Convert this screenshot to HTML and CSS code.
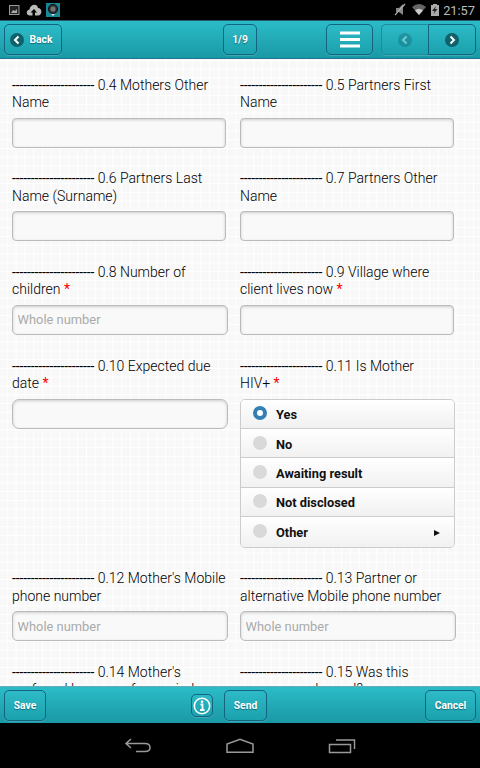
FILE: index.html
```html
<!DOCTYPE html>
<html lang="en">

<head>
    <meta charset="UTF-8">
    <meta name="viewport" content="width=device-width, initial-scale=1.0">
    <title>Registration Form</title>
    <link rel="stylesheet" href="styles.css">
</head>

<body>
    <div class="status-bar">
        <div class="status-left">
            <svg width="60" height="20" viewBox="0 0 60 20">
                <rect x="9.500" y="5.500" width="9.500" height="9" fill="#222" stroke="#999" />
                <path d="M11 13l2-3 2 1 2-2v4z" fill="#aaa" />
                <path d="M30.500 15.500c-4.500.5-5-5.500-1-6 1-6 8-6 8.500-1.500 4.500 0 4.500 7.500 0 7.500h-3v-3h2l-3-3.500-3.500 3.500h2v3z" fill="#bbb" />
                <rect x="46" y="3" width="14" height="14" fill="#188896" />
                <circle cx="53" cy="9" r="4.500" fill="#333" stroke="#111" stroke-width="1.200" />
                <circle cx="53" cy="9" r="2.500" fill="#777" />
                <path d="M51 14h4l-2 2z" fill="#ddd" />
            </svg>
        </div>
        <div class="status-right">
            <svg width="46" height="20" viewBox="0 0 46 20">
                <path d="M2 8h3l4-4v11l-4-3H2z" fill="#888" />
                <path d="M1 15L11 4" stroke="#aaa" stroke-width="1.200" />
                <path d="M18 7q7-6 14 0l-7 8z" fill="#666" />
                <path d="M21 10.500q4-3.500 8 0l-4 4.500z" fill="#ccc" />
                <path d="M37 5h2V4h4v1h2v11h-8z" fill="#aaa" />
                <path d="M42 6l-4 5h2.500l-1 3 4-5H41z" fill="#222" />
            </svg>
            <span>21:57</span>
        </div>
    </div>

    <div class="header">
        <button class="btn btn-back">
            <svg width="14" height="14" viewBox="0 0 14 14">
                <circle cx="7" cy="7" r="7" fill="#0f626b" />
                <path d="M8.500 3.500L5 7l3.500 3.500" fill="none" stroke="#fff" stroke-width="2" />
            </svg>
            Back
        </button>
        <button class="btn btn-page">1/9</button>
        <button class="btn btn-menu">
            <svg width="20" height="17" viewBox="0 0 20 17">
                <path d="M0 2h20M0 8.500h20M0 15h20" stroke="#fff" stroke-width="3" />
            </svg>
        </button>
        <div class="btn-group">
            <button class="btn disabled">
                <svg width="14" height="14" viewBox="0 0 14 14">
                    <circle cx="7" cy="7" r="7" fill="#0f626b" />
                    <path d="M8.500 3.500L5 7l3.500 3.500" fill="none" stroke="#fff" stroke-width="2" />
                </svg>
            </button>
            <button class="btn">
                <svg width="14" height="14" viewBox="0 0 14 14">
                    <circle cx="7" cy="7" r="7" fill="#0f626b" />
                    <path d="M5.500 3.500L9 7l-3.500 3.500" fill="none" stroke="#fff" stroke-width="2" />
                </svg>
            </button>
        </div>
    </div>

    <div class="content">
        <div class="field">
            <label><span class="dashes">----------------------</span> 0.4 Mothers Other<br>Name</label>
            <input type="text">
        </div>
        <div class="field">
            <label><span class="dashes">----------------------</span> 0.5 Partners First<br>Name</label>
            <input type="text">
        </div>
        <div class="field">
            <label><span class="dashes">----------------------</span> 0.6 Partners Last<br>Name (Surname)</label>
            <input type="text">
        </div>
        <div class="field">
            <label><span class="dashes">----------------------</span> 0.7 Partners Other<br>Name</label>
            <input type="text">
        </div>
        <div class="field">
            <label><span class="dashes">----------------------</span> 0.8 Number of<br>children <span class="required">*</span></label>
            <input class="wide" type="text" placeholder="Whole number">
        </div>
        <div class="field">
            <label><span class="dashes">----------------------</span> 0.9 Village where<br>client lives now <span class="required">*</span></label>
            <input type="text">
        </div>
        <div class="field">
            <label><span class="dashes">----------------------</span> 0.10 Expected due<br>date <span class="required">*</span></label>
            <input class="wide date" type="text">
        </div>
        <div class="field">
            <label><span class="dashes">----------------------</span> 0.11 Is Mother<br>HIV+ <span class="required">*</span></label>
            <div class="options">
                <div class="option"><span class="radio checked"></span>Yes</div>
                <div class="option"><span class="radio"></span>No</div>
                <div class="option"><span class="radio"></span>Awaiting result</div>
                <div class="option"><span class="radio"></span>Not disclosed</div>
                <div class="option"><span class="radio"></span>Other<span class="arrow"></span></div>
            </div>
        </div>
        <div class="field">
            <label><span class="dashes">----------------------</span> 0.12 Mother's Mobile<br>phone number</label>
            <input class="wide" type="text" placeholder="Whole number">
        </div>
        <div class="field">
            <label><span class="dashes">----------------------</span> 0.13 Partner or<br>alternative Mobile phone number</label>
            <input class="wide" type="text" placeholder="Whole number">
        </div>
        <div class="field">
            <label><span class="dashes">----------------------</span> 0.14 Mother's<br>preferred language for reminders</label>
        </div>
        <div class="field">
            <label><span class="dashes">----------------------</span> 0.15 Was this<br>pregnancy planned?</label>
        </div>
    </div>

    <div class="footer">
        <button class="btn btn-save">Save</button>
        <button class="btn btn-info">
            <svg width="18" height="18" viewBox="0 0 18 18">
                <circle cx="9" cy="9" r="7.700" fill="none" stroke="#fff" stroke-width="1.600" />
                <path d="M7.500 7.500H9.500v5M7 13h4.500" fill="none" stroke="#fff" stroke-width="1.800" />
                <circle cx="9" cy="4.800" r="1.300" fill="#fff" />
            </svg>
        </button>
        <button class="btn btn-send">Send</button>
        <button class="btn btn-cancel">Cancel</button>
    </div>

    <div class="nav-bar">
        <svg width="28" height="16" viewBox="0 0 28 16">
            <path d="M7 1L2 5.500 7 10M2 5.500h19q5 0 5 4t-5 4h-9" fill="none" stroke="#999" stroke-width="1.500" />
        </svg>
        <svg width="28" height="16" viewBox="0 0 28 16">
            <path d="M1 14.300V6L14 1.200 27 6v8.300z" fill="none" stroke="#999" stroke-width="1.500" />
        </svg>
        <svg width="28" height="16" viewBox="0 0 28 16">
            <path d="M1.500 6.500h21v8h-21zM8 2h18.500v9" fill="none" stroke="#999" stroke-width="1.500" />
        </svg>
    </div>
</body>

</html>
```
FILE: styles.css
```css
* {
    box-sizing: border-box;
}

body {
    margin: 0;
    width: 480px;
    height: 768px;
    display: flex;
    flex-direction: column;
    overflow: hidden;
    background-color: #000;
    font-family: Roboto, "Liberation Sans", sans-serif;
}

svg {
    display: block;
    flex: none;
}

.status-bar {
    height: 20px;
    flex: none;
    display: flex;
    justify-content: space-between;
    padding-right: 5px;
    color: #bbb;
    font-size: 12.8px;
    line-height: 21px;
}

.status-right {
    display: flex;
    gap: 3px;
}

.header,
.footer {
    flex: none;
    display: flex;
    align-items: flex-start;
    background-image: linear-gradient(#2bbcc8, #1a98a5);
}

.header {
    height: 39px;
    border-top: 1px solid #24546f;
    border-bottom: 1px solid #20758f;
    padding: 3px 4px 0;
}

.btn {
    height: 31px;
    padding: 0;
    display: flex;
    align-items: center;
    justify-content: center;
    border: 1px solid #12647f;
    border-radius: 5px;
    background-color: transparent;
    background-image: linear-gradient(#2dbac6, #1ba1ae);
    box-shadow: 0 1px 0 rgba(255, 255, 255, 0.15);
    color: #fff;
    font-family: Roboto, sans-serif;
    font-size: 10.3px;
    font-weight: 700;
    text-shadow: 0 1px 1px #126b78;
}

.btn-back {
    width: 58px;
    gap: 6px;
    padding-right: 4px;
}

.btn-page {
    width: 34px;
    margin-left: 161px;
}

.btn-menu {
    width: 47px;
    margin-left: 69px;
}

.btn-group {
    display: flex;
    margin-left: 8px;
}

.btn-group .btn {
    width: 48px;
    border-radius: 0 5px 5px 0;
}

.btn-group .disabled {
    width: 47px;
    border-color: #1d8b9b;
    border-right: none;
    border-radius: 5px 0 0 5px;
}

.disabled svg {
    opacity: 0.35;
}

.content {
    height: 627px;
    flex: none;
    overflow: hidden;
    display: grid;
    grid-template-columns: 216px 216px;
    column-gap: 12px;
    align-content: start;
    padding: 17.5px 12px 0;
    background-color: #f8f8f8;
    background-image: linear-gradient(#fff 1.4px, transparent 1.4px), linear-gradient(90deg, #fff 1.4px, transparent 1.4px);
    background-size: 8.8px 8.8px;
    background-position: 6.8px 1px;
}

.field {
    padding-bottom: 22.7px;
}

.field label {
    display: block;
    height: 36px;
    margin-bottom: 5px;
    color: #000;
    font-size: 14px;
    font-weight: 300;
    line-height: 17.6px;
    white-space: nowrap;
}

.dashes {
    font-weight: 400;
    letter-spacing: -0.13px;
}

.required {
    color: #f00;
    font-weight: 400;
}

.field input {
    display: block;
    width: 214px;
    height: 30px;
    margin: 0;
    padding: 0 4.5px;
    border: 1px solid #bbb;
    border-radius: 4px;
    background-color: #f9f9f9;
    box-shadow: inset 0 1px 3px rgba(0, 0, 0, 0.18);
    font-family: Roboto, sans-serif;
    font-size: 12.9px;
}

.field .wide {
    width: 216px;
    border-radius: 5px;
}

.field .date {
    border-radius: 7px;
}

.field input::placeholder {
    color: #aaa;
}

.options {
    width: 215px;
    border: 1px solid #ccc;
    border-radius: 5px;
    overflow: hidden;
}

.option {
    height: 29.4px;
    display: flex;
    align-items: center;
    padding: 2px 14px 0 12px;
    border-bottom: 1px solid #ccc;
    background-image: linear-gradient(#fff, #f1f1f1);
    color: #111;
    font-size: 12.8px;
    font-weight: 700;
}

.option:last-child {
    border-bottom: none;
}

.radio {
    width: 14px;
    height: 14px;
    margin: -3px 9px 0 0;
    border-radius: 50%;
    background-color: #d9d9d9;
}

.radio.checked {
    border: 4px solid #347fb4;
    background-color: #fff;
}

.arrow {
    margin-left: auto;
    border: 3px solid transparent;
    border-left: 6px solid #111;
    border-right: none;
}

.footer {
    height: 37px;
    border-top: 1px solid #66aab5;
    padding: 3px 4px 0;
}

.btn-save {
    width: 42px;
}

.btn-info {
    width: 22px;
    height: 23px;
    margin: 4px 0 0 145px;
}

.btn-send {
    width: 43px;
    margin-left: 11px;
}

.btn-cancel {
    width: 51px;
    margin-left: auto;
}

.nav-bar {
    height: 45px;
    flex: none;
    display: flex;
    justify-content: center;
    gap: 74px;
    padding-top: 15px;
}
```
